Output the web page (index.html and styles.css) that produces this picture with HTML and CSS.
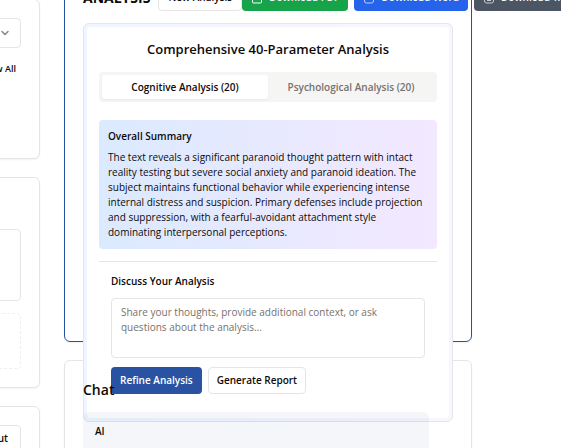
FILE: index.html
```html
<!DOCTYPE html>
<html lang="en">
<head>
<meta charset="utf-8">
<title>Analysis</title>
<link rel="stylesheet" href="styles.css">
</head>
<body>
<div class="page">
  <aside class="sidebar">
    <section class="card card-options">
      <button class="picker" type="button" aria-label="Choose option">
        <svg width="12" height="12" viewBox="0 0 24 24" fill="none" stroke="currentColor" stroke-width="3" stroke-linecap="round" stroke-linejoin="round"><path d="m6 9 6 6 6-6"/></svg>
      </button>
      <a class="view-all" href="#">View All</a>
    </section>
    <section class="card card-upload">
      <div class="box"></div>
      <div class="box box-dashed"></div>
    </section>
    <section class="card card-output">
      <button class="btn btn-outline" type="button">Input</button>
    </section>
  </aside>
  <main class="main">
    <section class="card card-analysis">
      <header class="toolbar">
        <h2>ANALYSIS</h2>
        <div class="actions">
          <button class="btn btn-outline" type="button">New Analysis</button>
          <div class="downloads">
            <button class="btn btn-green" type="button"><svg width="12" height="12" viewBox="0 0 24 24" fill="none" stroke="currentColor" stroke-width="2" stroke-linejoin="round"><rect x="3" y="2" width="18" height="20" rx="2"/></svg>Download PDF</button>
            <button class="btn btn-blue" type="button"><svg class="icon-soft" width="12" height="12" viewBox="0 0 24 24" fill="none" stroke="currentColor" stroke-width="2" stroke-linejoin="round"><rect x="3" y="2" width="18" height="20" rx="4"/></svg>Download Word</button>
            <button class="btn btn-gray" type="button"><svg class="icon-soft" width="12" height="12" viewBox="0 0 24 24" fill="none" stroke="currentColor" stroke-width="2" stroke-linejoin="round"><rect x="3" y="2" width="18" height="20" rx="4"/><path d="M8 13h8M8 17h8"/></svg>Download TXT</button>
          </div>
        </div>
      </header>
      <div class="panel">
        <div class="panel-body">
          <h3>Comprehensive 40-Parameter Analysis</h3>
          <div class="tabs" role="tablist">
            <button class="tab tab-active" role="tab" aria-selected="true" type="button">Cognitive Analysis (20)</button>
            <button class="tab" role="tab" aria-selected="false" type="button">Psychological Analysis (20)</button>
          </div>
          <div class="summary">
            <h4>Overall Summary</h4>
            <p>The text reveals a significant paranoid thought pattern with intact reality testing but severe social anxiety and paranoid ideation. The subject maintains functional behavior while experiencing intense internal distress and suspicion. Primary defenses include projection and suppression, with a fearful-avoidant attachment style dominating interpersonal perceptions.</p>
          </div>
          <form class="discuss">
            <label for="thoughts">Discuss Your Analysis</label>
            <textarea id="thoughts" placeholder="Share your thoughts, provide additional context, or ask questions about the analysis..."></textarea>
            <div class="discuss-actions">
              <button class="btn btn-primary" type="button">Refine Analysis</button>
              <button class="btn btn-outline" type="button">Generate Report</button>
            </div>
          </form>
        </div>
      </div>
    </section>
    <section class="card card-chat">
      <div class="chat">
        <h3>Chat</h3>
        <div class="message"><strong>AI</strong></div>
      </div>
    </section>
  </main>
</div>
</body>
</html>
```

FILE: styles.css
```css
* { box-sizing: border-box; }

body {
  margin: 0;
  height: 100vh;
  overflow: hidden;
  background: #fff;
  color: #0c0a09;
  font: 10px/15px "Open Sans", "Noto Sans", sans-serif;
}

h2, h3, h4, p { margin: 0; }
button, textarea { font: inherit; color: inherit; }

.page {
  display: grid;
  grid-template-columns: 40px 1fr;
  column-gap: 24px;
  padding-right: 89px;
  height: 100vh;
  overflow: hidden;
}

.sidebar, .main {
  display: flex;
  flex-direction: column;
  gap: 18px;
  min-width: 0;
}

.sidebar { margin-left: -200px; }
.main { margin-top: -35px; }

.card {
  flex: none;
  border: 1px solid #e7e5e4;
  border-radius: 6px;
  background: #fff;
  padding: 18px;
  box-shadow: 0 1px 2px rgba(0, 0, 0, 0.05);
}

.card-options {
  display: flex;
  flex-direction: column;
  align-items: flex-end;
  gap: 13px;
  height: 160px;
  margin-top: -1px;
}

.picker {
  display: flex;
  justify-content: flex-end;
  align-items: center;
  width: 100%;
  height: 30px;
  padding: 0 9px;
  border: 1px solid #e7e5e4;
  border-radius: 4px;
  background: #fff;
  color: #8a8886;
}

.view-all {
  margin-right: 5px;
  color: inherit;
  font-size: 9px;
  font-weight: 600;
  text-decoration: none;
}

.card-upload {
  display: flex;
  flex-direction: column;
  justify-content: flex-end;
  gap: 12px;
  height: 211px;
}

.box {
  height: 72px;
  border: 1px solid #e7e5e4;
  border-radius: 4px;
}

.box-dashed {
  height: 56px;
  border: 1px dashed #f0efee;
}

.card-output .btn { width: 100%; justify-content: flex-end; padding: 0 12px; }

.card-analysis {
  height: 377px;
  border-color: #2952a3;
}

.toolbar {
  display: flex;
  align-items: center;
  gap: 8px;
  height: 27px;
}

.toolbar h2 {
  font-size: 14px;
  font-weight: 700;
  line-height: 20px;
}

.actions, .downloads { display: flex; }
.downloads { gap: 6px; }

.btn {
  display: inline-flex;
  align-items: center;
  justify-content: center;
  flex: none;
  gap: 6px;
  height: 27px;
  padding: 0 8px;
  border: 1px solid transparent;
  border-radius: 4px;
  font-weight: 600;
  white-space: nowrap;
}

.icon-soft { opacity: 0.7; }

.btn-outline { background: #fff; border-color: #e7e5e4; }
.btn-green { background: #16a34a; color: #fff; }
.btn-blue { background: #2563eb; color: #fff; }
.btn-gray { background: #4b5563; color: #fff; }
.btn-primary { background: #2952a3; color: #fff; }

.toolbar .btn-outline { padding: 0 9px; }

.panel {
  position: relative;
  z-index: 1;
  margin-top: 12px;
  padding: 3px;
  border: 1px solid #e5e5ea;
  border-radius: 6px;
  background: linear-gradient(to right, #eff6ff, #faf5ff);
}

.panel-body {
  padding: 12px 12px 24px;
  border-radius: 4px;
  background: #fff;
}

.panel-body h3 {
  font-size: 13px;
  font-weight: 600;
  line-height: 21px;
  text-align: center;
}

.tabs {
  display: grid;
  grid-template-columns: 1fr 1fr;
  margin-top: 12px;
  padding: 3px;
  border-radius: 4px;
  background: #f5f5f4;
}

.tab {
  height: 24px;
  padding: 0;
  border: 0;
  border-radius: 3px;
  background: none;
  color: #78716c;
  font-weight: 600;
}

.tab-active {
  background: #fff;
  color: #0c0a09;
  box-shadow: 0 1px 2px rgba(0, 0, 0, 0.05);
}

.summary {
  margin-top: 18px;
  padding: 9px;
  border-radius: 4px;
  background: linear-gradient(to right, #dbeafe, #f3e8ff);
}

.summary h4 {
  margin-bottom: 6px;
  font-size: 10px;
  font-weight: 600;
}

.discuss {
  display: flex;
  flex-direction: column;
  margin-top: 12px;
  padding: 12px 12px 0;
  border-top: 1px solid #e7e5e4;
}

.discuss label { font-weight: 600; }

.discuss textarea {
  height: 60px;
  margin: 9px 0;
  padding: 6px 9px;
  border: 1px solid #e7e5e4;
  border-radius: 4px;
  resize: none;
}

.discuss textarea::placeholder { color: #78716c; opacity: 1; }

.discuss-actions { display: flex; gap: 6px; }

.card-chat { min-height: 160px; }

.chat {
  position: relative;
  z-index: 2;
}

.chat h3 {
  font-size: 14px;
  font-weight: 600;
  line-height: 21px;
}

.message {
  margin: 12px 24px 0 0;
  padding: 12px;
  border-radius: 6px;
  background: rgba(41, 82, 163, 0.05);
  min-height: 80px;
}

.message strong { font-weight: 600; }
```
